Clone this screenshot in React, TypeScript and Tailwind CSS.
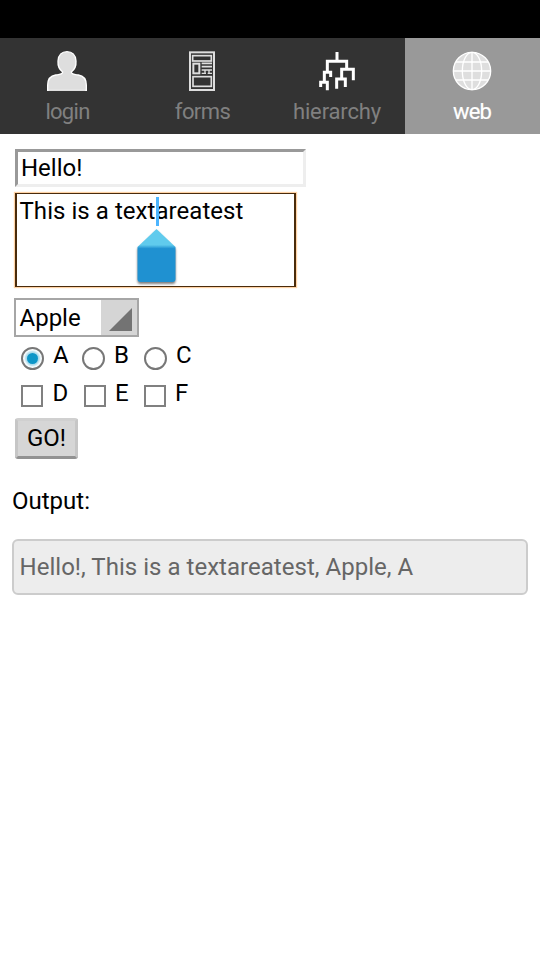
import React from "react";

function LoginIcon() {
  return (
    <svg className="h-14 w-[135px]" viewBox="0 24 405 168">
      <path
        d="M143 181V166C143 145 153 137 167 135C181 133 188 133 188 126C177 118 173 108 174 93C175 75 186 65 201 65C216 65 227 75 228 93C229 108 225 118 214 126C214 133 221 133 235 135C249 137 259 145 259 166V181Z"
        fill="#dedede"
        stroke="#fff"
        strokeWidth="4"
      />
      <path d="M146 181H256" stroke="#dedede" strokeWidth="4" />
    </svg>
  );
}

function FormsIcon() {
  return (
    <svg className="h-14 w-[135px]" viewBox="0 24 405 168" fill="none" stroke="#dedede">
      <rect x="165" y="67" width="72" height="113" strokeWidth="6" />
      <rect x="173" y="77" width="56" height="16" strokeWidth="5" />
      <rect x="175" y="101" width="18" height="29" strokeWidth="6" />
      <path d="M200 100H231M200 110H231M200 120H231" strokeWidth="5" />
      <path d="M200 130H213M218 130H231M210 120V132M222 120V132" strokeWidth="4" />
      <rect x="174" y="140" width="55" height="29" strokeWidth="5" />
    </svg>
  );
}

function HierarchyIcon() {
  return (
    <svg className="h-14 w-[135px]" viewBox="0 24 405 168" fill="none" stroke="#fff" strokeWidth="9">
      <path d="M201 66V94M172 127V94H230V118M182 141V127H163V157M152 171V157H172V181" />
      <path d="M250 151V118H215V147M200 176V147H226V171" />
    </svg>
  );
}

function GlobeIcon() {
  return (
    <svg className="h-14 w-[135px]" viewBox="0 24 405 168" fill="none" stroke="#fff" strokeWidth="4">
      <circle cx="201" cy="123" r="56" fill="#dedede" />
      <ellipse cx="201" cy="123" rx="29" ry="56" />
      <path d="M201 67V179M145 123H257M153 96H249M153 150H249" />
    </svg>
  );
}

const tabs = [
  { label: "login", Icon: LoginIcon, text: "tracking-[-0.7px]" },
  { label: "forms", Icon: FormsIcon, text: "tracking-[-0.6px]" },
  { label: "hierarchy", Icon: HierarchyIcon, text: "tracking-[-0.15px] pr-px" },
  { label: "web", Icon: GlobeIcon, text: "tracking-[-0.9px] pr-px [-webkit-text-stroke:0.2px_white]" },
];

function Radio({ checked }: { checked?: boolean }) {
  return (
    <span className="mt-[6px] mr-px flex size-[23px] items-center justify-center rounded-full border-2 border-[#777] bg-white">
      {checked && <span className="size-[11px] rounded-full bg-[#0d96c8] shadow-[0_0_2px_2px_#a5d9eb]" />}
    </span>
  );
}

function Checkbox() {
  return <span className="mt-[6px] size-[22px] border-2 border-[#808080] bg-white" />;
}

export default function App() {
  return (
    <div className="h-[960px] w-[540px] overflow-hidden bg-white font-[Roboto,sans-serif] text-2xl leading-7 text-black">
      <div className="h-[38px] bg-black" />
      <nav className="grid h-24 grid-cols-4 bg-[#333]">
        {tabs.map(({ label, Icon, text }) => (
          <div
            key={label}
            className={
              label === "web"
                ? "flex flex-col items-center bg-[#999] text-white"
                : "flex flex-col items-center text-[#808080]"
            }
          >
            <Icon />
            <span className={`mt-1 text-[22px] leading-7 ${text}`}>{label}</span>
          </div>
        ))}
      </nav>

      <main className="flex flex-col items-start px-3 pt-[15px]">
        <div className="ml-[3px] h-[38px] w-[291px] border-[3px] border-t-[#999] border-r-[#eee] border-b-[#eee] border-l-[#999] pt-0.5 pl-[3px]">
          Hello!
        </div>

        <div className="relative mt-[6px] ml-[3px] h-[94px] w-[281px] border border-r-2 border-l-2 border-[#4a2b0b] pt-[3px] pl-[2.5px] tracking-[0.05px] shadow-[0_0_1px_1px_#ffd3a6]">
          This is a textareatest
          <span className="absolute top-[3px] left-[139px] h-[29px] w-[3px] bg-[#4db5ff]" />
          <svg className="absolute top-[34px] left-[117px] h-[62px] w-[46px]" viewBox="0 0 46 62">
            <defs>
              <linearGradient id="handle" x1="0" y1="0" x2="0" y2="1">
                <stop offset="0" stopColor="#60cbed" />
                <stop offset=".3" stopColor="#60cbed" />
                <stop offset=".37" stopColor="#1f91d1" />
                <stop offset="1" stopColor="#1f91d1" />
              </linearGradient>
            </defs>
            <path
              className="drop-shadow-[0_2px_1px_#00000080]"
              d="M22.5 1L41.5 19V51Q41.5 54 38.5 54H6.500Q3.500 54 3.500 51V19Z"
              fill="url(#handle)"
            />
          </svg>
        </div>

        <div className="mt-[11px] ml-[2px] flex h-[39px] w-[125px] border-2 border-[#a6a6a6]">
          <span className="w-[85px] pt-1 pl-[3.5px]">Apple</span>
          <span className="flex-1 bg-[#d5d5d5] pt-2 pl-2">
            <svg className="size-[23px]" viewBox="0 0 23 23">
              <path d="M23 0V23H0Z" fill="#737373" />
            </svg>
          </span>
        </div>

        <div className="mt-1 ml-[9px] flex h-[34px]">
          <span className="flex w-[61px] gap-[8px]"><Radio checked />A</span>
          <span className="flex w-[62px] gap-[8px]"><Radio />B</span>
          <span className="flex gap-[8px]"><Radio />C</span>
        </div>
        <div className="mt-1 ml-[9px] flex h-[34px]">
          <span className="flex w-[63px] gap-[9.5px]"><Checkbox />D</span>
          <span className="flex w-[60px] gap-[9px]"><Checkbox />E</span>
          <span className="flex gap-[9px]"><Checkbox />F</span>
        </div>

        <div className="mt-[5px] ml-[3px] h-[41px] w-[63px] rounded-[3px] border-[3px] border-t-[#d0d0d0] border-r-[#c6c6c6] border-b-[#929292] border-l-[#c6c6c6] bg-[#d6d6d6] pt-[3px] pl-[9px]">
          GO!
        </div>

        <div className="mt-[28px]">Output:</div>

        <div className="mt-[24px] h-14 w-[516px] rounded-md border-2 border-[#ccc] bg-[#ededed] pt-3 pl-[5.5px] tracking-[0.03px] text-[#666]">
          Hello!, This is a textareatest, Apple, A
        </div>
      </main>
    </div>
  );
}
